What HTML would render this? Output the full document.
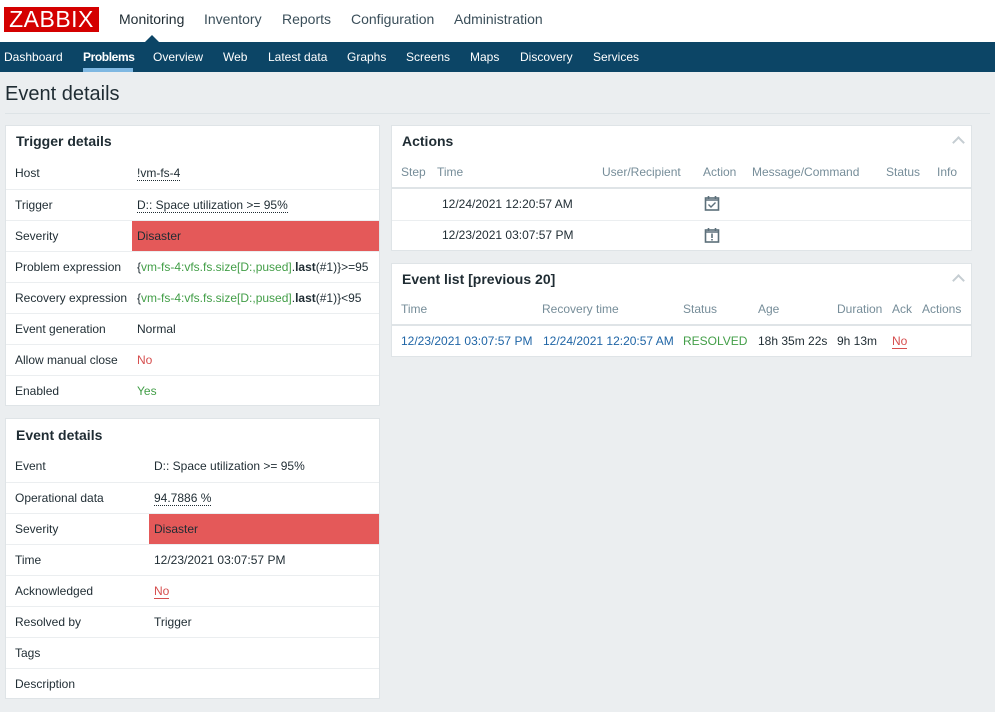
<!DOCTYPE html>
<html><head><meta charset="utf-8"><style>
*{box-sizing:border-box;margin:0;padding:0}
body{width:995px;height:712px;overflow:hidden;background:#ebeef0;font-family:"Liberation Sans",Arial,sans-serif;font-size:12px;color:#1f2c33;position:relative}
.a{position:absolute}
.top{left:0;top:0;width:995px;height:42px;background:#fff}
.logo{left:4px;top:7px;width:95px;height:25px;background:#d40000;color:#fff;font-size:23px;line-height:25px;text-align:center;letter-spacing:0.5px}
.menu span{position:absolute;top:11px;font-size:14px;color:#3b4f5a}
.nav{left:0;top:42px;width:995px;height:30px;background:#0c4566}
.nav span{position:absolute;top:8px;color:#fff;font-size:12px}
.title{left:5px;top:83px;font-size:20px;color:#1f2c33}
.hr{left:5px;top:113px;width:985px;height:1px;background:#dde3e6}
.panel{background:#fff;border:1px solid #dfe4e7}
.ph{position:absolute;left:10px;font-weight:bold;font-size:14px;color:#1f2c33}
.row{position:absolute;left:0;width:100%;height:31px;border-top:1px solid #ebeef0;line-height:30px}
.row .l{position:absolute;left:9px}
.row .v{position:absolute}
.sev{background:#e45959;color:#1f2c33;position:absolute;top:0;bottom:0;right:0;padding-left:5px}
.dot{border-bottom:1px dotted #1f2c33}
.g{color:#429e47}
.r{color:#d64e4e;border-bottom:1px solid #d64e4e}
.th{position:absolute;color:#768d99;font-size:12px}
.td{position:absolute;font-size:12px}
.blue{color:#1f65a6}
.chev{position:absolute;right:8px;width:9px;height:9px;border-left:2px solid #c5cdd2;border-top:2px solid #c5cdd2;transform:rotate(45deg)}
</style></head><body>
<div class="a top"></div>
<div class="a logo">ZABBIX</div>
<div class="menu"><span style="left:119px;color:#1f2c33">Monitoring</span><span style="left:204px">Inventory</span><span style="left:282px">Reports</span><span style="left:351px">Configuration</span><span style="left:454px">Administration</span></div>
<div class="a" style="left:145px;top:35px;width:0;height:0;border-left:7px solid transparent;border-right:7px solid transparent;border-bottom:7px solid #0c4566"></div>
<div class="a nav"><span style="left:4px">Dashboard</span><span style="left:83px;font-weight:bold;letter-spacing:-0.4px">Problems</span><span style="left:153px">Overview</span><span style="left:223px">Web</span><span style="left:268px">Latest data</span><span style="left:347px">Graphs</span><span style="left:406px">Screens</span><span style="left:470px">Maps</span><span style="left:520px">Discovery</span><span style="left:593px">Services</span>
<div class="a" style="left:83px;top:26px;width:50px;height:4px;background:#7fb8e2"></div></div>
<div class="a title">Event details</div>
<div class="a hr"></div>

<div class="a panel" style="left:5px;top:125px;width:375px;height:281px">
<div class="ph" style="top:7px">Trigger details</div>
<div class="row" style="top:32px;border-top:none"><span class="l">Host</span><span class="v" style="left:131px"><span class="dot">!vm-fs-4</span></span></div>
<div class="row" style="top:63px"><span class="l">Trigger</span><span class="v" style="left:131px"><span class="dot">D:: Space utilization &gt;= 95%</span></span></div>
<div class="row" style="top:94px"><span class="l">Severity</span><div class="sev" style="left:126px">Disaster</div></div>
<div class="row" style="top:125px"><span class="l">Problem expression</span><span class="v" style="left:131px">{<span class="g">vm-fs-4:vfs.fs.size[D:,pused]</span>.<b>last</b>(#1)}&gt;=95</span></div>
<div class="row" style="top:156px"><span class="l">Recovery expression</span><span class="v" style="left:131px">{<span class="g">vm-fs-4:vfs.fs.size[D:,pused]</span>.<b>last</b>(#1)}&lt;95</span></div>
<div class="row" style="top:187px"><span class="l">Event generation</span><span class="v" style="left:131px">Normal</span></div>
<div class="row" style="top:218px"><span class="l">Allow manual close</span><span class="v" style="left:131px;color:#d64e4e">No</span></div>
<div class="row" style="top:249px"><span class="l">Enabled</span><span class="v g" style="left:131px">Yes</span></div>
</div>

<div class="a panel" style="left:5px;top:418px;width:375px;height:281px">
<div class="ph" style="top:8px">Event details</div>
<div class="row" style="top:32px;border-top:none"><span class="l">Event</span><span class="v" style="left:148px">D:: Space utilization &gt;= 95%</span></div>
<div class="row" style="top:63px"><span class="l">Operational data</span><span class="v" style="left:148px"><span class="dot">94.7886 %</span></span></div>
<div class="row" style="top:94px"><span class="l">Severity</span><div class="sev" style="left:143px">Disaster</div></div>
<div class="row" style="top:125px"><span class="l">Time</span><span class="v" style="left:148px">12/23/2021 03:07:57 PM</span></div>
<div class="row" style="top:156px"><span class="l">Acknowledged</span><span class="v" style="left:148px"><span class="r">No</span></span></div>
<div class="row" style="top:187px"><span class="l">Resolved by</span><span class="v" style="left:148px">Trigger</span></div>
<div class="row" style="top:218px"><span class="l">Tags</span></div>
<div class="row" style="top:249px"><span class="l">Description</span></div>
</div>

<div class="a panel" style="left:391px;top:125px;width:581px;height:126px">
<div class="ph" style="top:7px">Actions</div><div class="chev" style="top:12px"></div>
<span class="th" style="left:9px;top:39px">Step</span><span class="th" style="left:45px;top:39px">Time</span><span class="th" style="left:210px;top:39px">User/Recipient</span><span class="th" style="left:311px;top:39px">Action</span><span class="th" style="left:360px;top:39px">Message/Command</span><span class="th" style="left:494px;top:39px">Status</span><span class="th" style="left:545px;top:39px">Info</span>
<div class="a" style="left:0;top:61px;width:579px;height:2px;background:#dfe4e7"></div>
<span class="td" style="left:50px;top:71px">12/24/2021 12:20:57 AM</span>
<svg class="a" style="left:312px;top:69px" width="16" height="16" viewBox="0 0 16 16"><rect x="1.5" y="3" width="13" height="12" fill="none" stroke="#5c6f7a" stroke-width="1.6"/><path d="M1.5 5h13M4.5 1v3M11.5 1v3" stroke="#5c6f7a" stroke-width="1.6"/><path d="M4.5 9.5l2.5 2.5 4.5-4.5" fill="none" stroke="#5c6f7a" stroke-width="1.4"/></svg>
<div class="a" style="left:0;top:94px;width:579px;height:1px;background:#ebeef0"></div>
<span class="td" style="left:50px;top:102px">12/23/2021 03:07:57 PM</span>
<svg class="a" style="left:312px;top:101px" width="16" height="16" viewBox="0 0 16 16"><rect x="1.5" y="3" width="13" height="12" fill="none" stroke="#5c6f7a" stroke-width="1.6"/><path d="M1.5 5h13M4.5 1v3M11.5 1v3M8 6.5v4.5M8 12v1.5" stroke="#5c6f7a" stroke-width="1.6"/></svg>
</div>

<div class="a panel" style="left:391px;top:263px;width:581px;height:94px">
<div class="ph" style="top:7px">Event list [previous 20]</div><div class="chev" style="top:12px"></div>
<span class="th" style="left:9px;top:38px">Time</span><span class="th" style="left:150px;top:38px">Recovery time</span><span class="th" style="left:291px;top:38px">Status</span><span class="th" style="left:366px;top:38px">Age</span><span class="th" style="left:445px;top:38px">Duration</span><span class="th" style="left:500px;top:38px">Ack</span><span class="th" style="left:530px;top:38px">Actions</span>
<div class="a" style="left:0;top:60px;width:579px;height:2px;background:#dfe4e7"></div>
<span class="td blue" style="left:9px;top:70px">12/23/2021 03:07:57 PM</span><span class="td blue" style="left:151px;top:70px">12/24/2021 12:20:57 AM</span><span class="td" style="left:291px;top:70px;color:#429e47">RESOLVED</span><span class="td" style="left:366px;top:70px">18h 35m 22s</span><span class="td" style="left:445px;top:70px">9h 13m</span><span class="td" style="left:500px;top:70px"><span class="r">No</span></span>
</div>
</body></html>
